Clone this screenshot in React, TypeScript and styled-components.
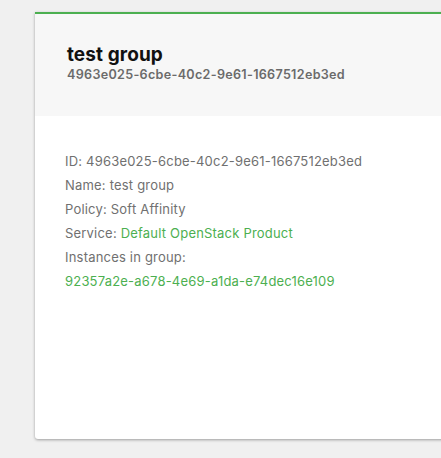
import styled, { createGlobalStyle } from 'styled-components';

const GlobalStyle = createGlobalStyle`
  html, body {
    margin: 0;
    padding: 0;
    background: #f0f0f0;
    overflow: hidden;
  }
  body {
    font-family: Inter, "Noto Sans", sans-serif;
  }
`

const Page = styled.div`
  width: 441px;
  height: 458px;
  overflow: hidden;
  padding: 12px 0 0 35px;
  box-sizing: border-box;
`

const Card = styled.div`
  width: 480px;
  height: 425px;
  background: #fff;
  border-top: 2px solid #4caf50;
  border-radius: 0 0 3px 3px;
  box-shadow: 0 1px 3px rgba(0, 0, 0, 0.35);
  display: flex;
  flex-direction: column;
`

const Header = styled.div`
  background: #f7f7f7;
  height: 102px;
  padding: 29px 32px 0;
  box-sizing: border-box;
`

const Title = styled.h2`
  margin: 0;
  font-size: 19px;
  line-height: 24px;
  font-weight: 700;
  letter-spacing: 0.1px;
  color: #111;
`

const SubTitle = styled.div`
  font-size: 12.6px;
  line-height: 16px;
  font-weight: 600;
  letter-spacing: 0.3px;
  color: #6b6b6b;
`

const Body = styled.div`
  padding: 33px 30px;
  font-size: 13px;
  line-height: 24px;
  letter-spacing: 0.2px;
  color: #707070;
`

const Row = styled.div``

const Link = styled.a`
  color: #4caf50;
  text-decoration: none;
`

export default function App() {
  const id = '4963e025-6cbe-40c2-9e61-1667512eb3ed'

  return (
    <>
      <GlobalStyle />
      <Page>
        <Card>
          <Header>
            <Title>test group</Title>
            <SubTitle>{id}</SubTitle>
          </Header>
          <Body>
            <Row>ID: {id}</Row>
            <Row>Name: test group</Row>
            <Row>Policy: Soft Affinity</Row>
            <Row>
              Service: <Link href='#'>Default OpenStack Product</Link>
            </Row>
            <Row>Instances in group:</Row>
            <Row>
              <Link href='#'>92357a2e-a678-4e69-a1da-e74dec16e109</Link>
            </Row>
          </Body>
        </Card>
      </Page>
    </>
  )
}
